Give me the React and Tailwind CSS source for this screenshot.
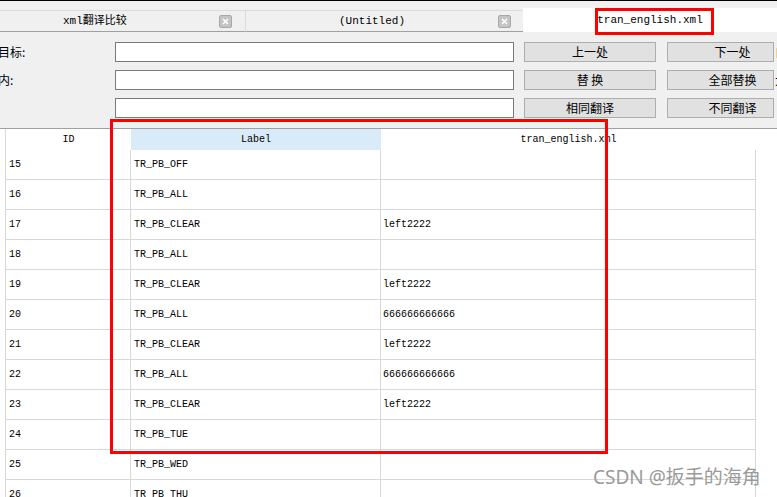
import React from "react";

const rows = [
  { id: 15, label: "TR_PB_OFF", value: "" },
  { id: 16, label: "TR_PB_ALL", value: "" },
  { id: 17, label: "TR_PB_CLEAR", value: "left2222" },
  { id: 18, label: "TR_PB_ALL", value: "" },
  { id: 19, label: "TR_PB_CLEAR", value: "left2222" },
  { id: 20, label: "TR_PB_ALL", value: "666666666666" },
  { id: 21, label: "TR_PB_CLEAR", value: "left2222" },
  { id: 22, label: "TR_PB_ALL", value: "666666666666" },
  { id: 23, label: "TR_PB_CLEAR", value: "left2222" },
  { id: 24, label: "TR_PB_TUE", value: "" },
  { id: 25, label: "TR_PB_WED", value: "" },
  { id: 26, label: "TR_PB_THU", value: "" },
];

const mono = "font-['Liberation_Mono','Noto_Sans_CJK_SC',monospace]";
const cjk = "font-['Noto_Sans_CJK_SC','Liberation_Sans',sans-serif]";

function CloseBox() {
  return (
    <div className="flex h-[13px] w-[13px] items-center justify-center rounded-[2px] border border-[#a8a8a8] bg-[#c4c4c4]">
      <svg width="7" height="7" viewBox="0 0 7 7">
        <path d="M1 1L6 6M6 1L1 6" stroke="#ffffff" strokeWidth="1.6" />
      </svg>
    </div>
  );
}

function Btn({ children, wide }) {
  return (
    <div
      className={`flex h-[20px] shrink-0 items-center justify-center border border-[#adadad] bg-[#e1e1e1] text-[12px] text-black ${cjk} ${
        wide ? "ml-[11px] w-[107px] pl-[24px]" : "ml-[10px] w-[132px]"
      }`}
    >
      {children}
    </div>
  );
}

function ToolRow({ label, b1, b2, tail }) {
  return (
    <div className="flex h-[20px] items-center">
      <div className={`w-[115px] shrink-0 overflow-hidden whitespace-nowrap text-[12px] ${cjk}`}>
        <span className="ml-[-2px]">{label}</span>
      </div>
      <div className="h-[20px] w-[399px] shrink-0 border border-[#7a7a7a] bg-white" />
      <Btn>{b1}</Btn>
      <Btn wide>{b2}</Btn>
      <div className={`ml-[1px] shrink-0 whitespace-nowrap text-[12px] ${cjk}`}>{tail}</div>
    </div>
  );
}

export default function App() {
  return (
    <div className="relative h-[497px] w-[777px] overflow-hidden bg-white">
      <div className="h-px bg-black" />

      {/* tab strip */}
      <div className={`flex h-[31px] bg-[#f0f0f0] text-[11px] text-black ${mono}`}>
        <div className="mt-[9px] flex h-[22px] w-[246px] items-center border-b border-r border-t border-b-[#a0a0a0] border-r-[#dadada] border-t-[#dadada]">
          <span className="ml-[63px] flex-1">xml翻译比较</span>
          <div className="mr-[13px]">
            <CloseBox />
          </div>
        </div>
        <div className="mt-[9px] flex h-[22px] w-[277px] items-center border-b border-t border-b-[#a0a0a0] border-t-[#dadada]">
          <span className="flex-1 text-center">(Untitled)</span>
          <div className="mr-[12px]">
            <CloseBox />
          </div>
        </div>
        <div className="mt-[7px] flex h-[24px] flex-1 items-center justify-center bg-white">
          tran_english.xml
        </div>
      </div>

      {/* search / replace panel */}
      <div className="flex h-[97px] flex-col gap-[8px] overflow-hidden border-b border-[#a0a0a0] bg-[#f0f0f0] pt-[10px]">
        <ToolRow label="目标:" b1="上一处" b2="下一处" tail="自" />
        <ToolRow label="内:" b1="替 换" b2="全部替换" tail="大" />
        <ToolRow label="" b1="相同翻译" b2="不同翻译" tail="" />
      </div>

      {/* table */}
      <div className={`ml-[5px] border-l border-[#d8d8d8] text-[10px] text-black ${mono}`}>
        <div className="flex h-[21px] items-center">
          <div className="w-[125px] text-center">ID</div>
          <div className="flex h-full w-[250px] items-center justify-center bg-[#d9ebf9]">Label</div>
          <div className="w-[375px] text-center">tran_english.xml</div>
        </div>
        {rows.map((row) => (
          <div key={row.id} className="flex h-[30px] w-[750px] border-b border-[#d8d8d8]">
            <div className="flex w-[125px] items-center border-r border-[#d8d8d8] pl-[3px]">{row.id}</div>
            <div className="flex w-[250px] items-center border-r border-[#d8d8d8] pl-[3px]">{row.label}</div>
            <div className="flex w-[375px] items-center border-r border-[#d8d8d8] pl-[2px]">{row.value}</div>
          </div>
        ))}
      </div>

      {/* annotation boxes */}
      <div className="absolute left-[595px] top-[8px] h-[27px] w-[119px] border-[3px] border-[#ff0000]" />
      <div className="absolute left-[110px] top-[119px] h-[335px] w-[498px] border-[3px] border-[#ff0000]" />

      <div className="absolute left-[593px] top-[467px] whitespace-nowrap font-['Noto_Sans','Noto_Sans_CJK_SC',sans-serif] text-[19px] leading-[20px] text-[#9a9a9a]">
        CSDN @扳手的海角
      </div>
    </div>
  );
}
